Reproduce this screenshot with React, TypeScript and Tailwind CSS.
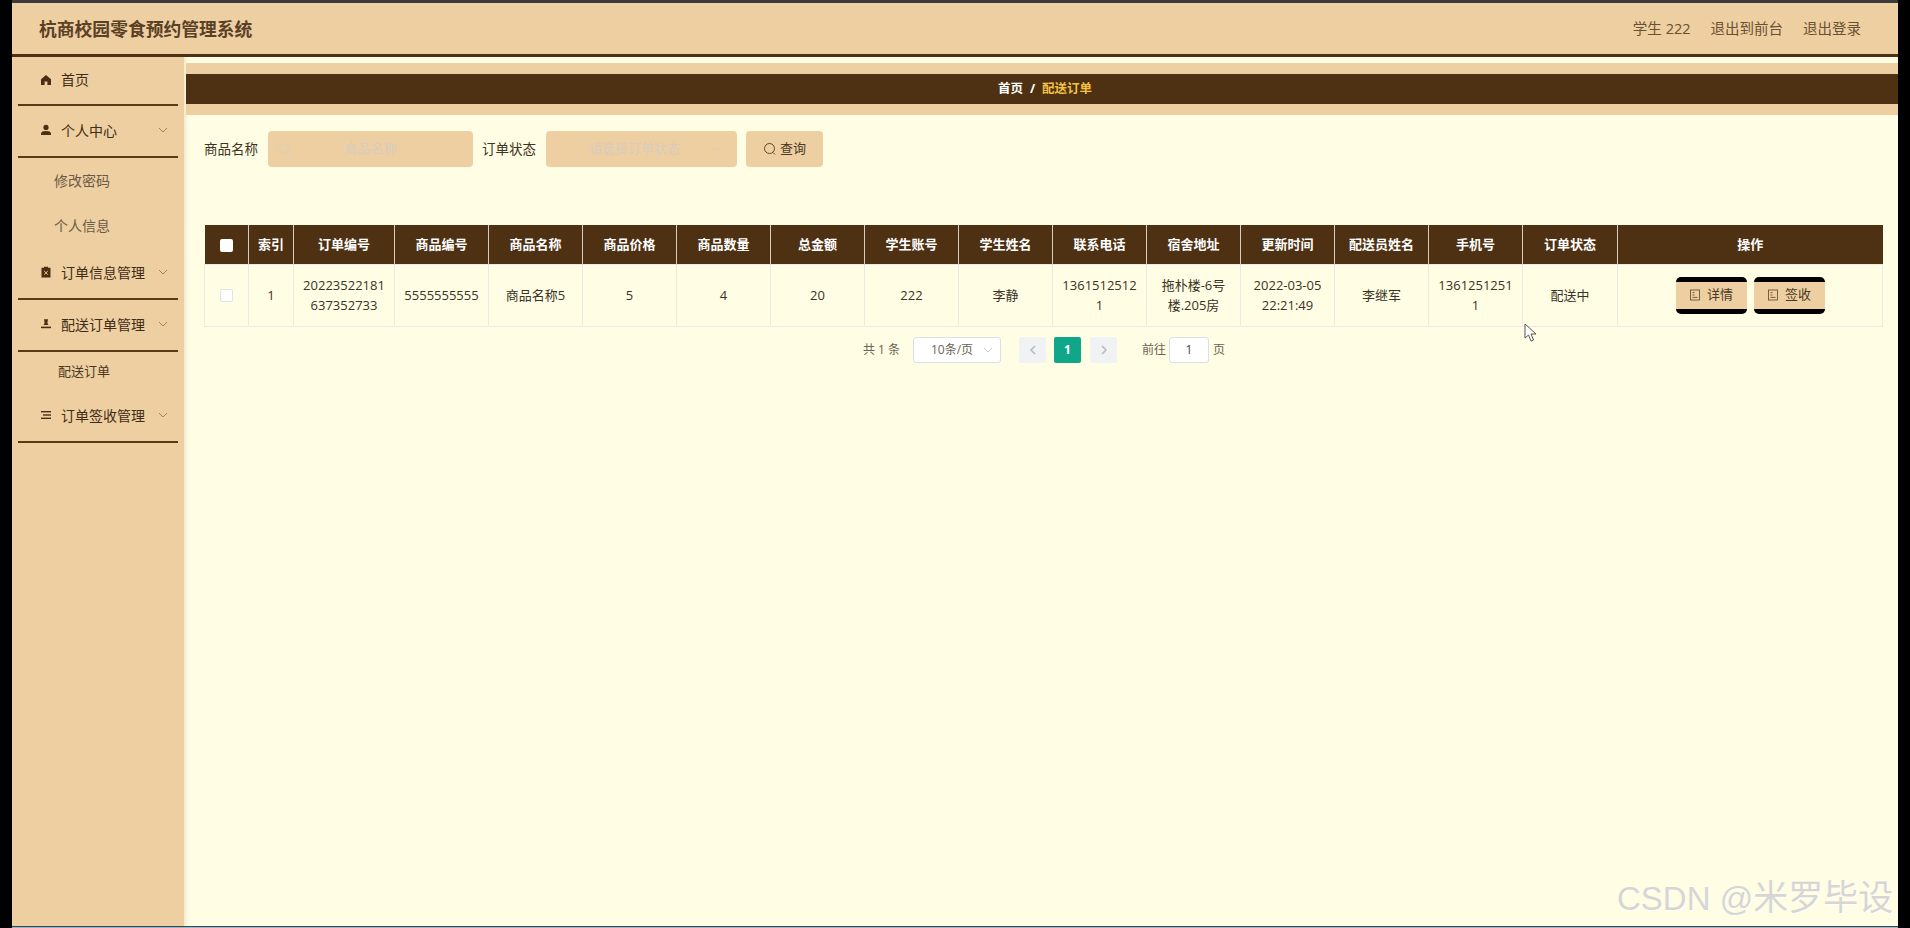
import React from "react";

const font = { fontFamily: '"Open Sans", "Noto Sans CJK SC", sans-serif' };

const columns = [
  { title: "索引", width: "w-[45px]" },
  { title: "订单编号", width: "w-[101px]" },
  { title: "商品编号", width: "w-[94px]" },
  { title: "商品名称", width: "w-[94px]" },
  { title: "商品价格", width: "w-[94px]" },
  { title: "商品数量", width: "w-[94px]" },
  { title: "总金额", width: "w-[94px]" },
  { title: "学生账号", width: "w-[94px]" },
  { title: "学生姓名", width: "w-[94px]" },
  { title: "联系电话", width: "w-[94px]" },
  { title: "宿舍地址", width: "w-[94px]" },
  { title: "更新时间", width: "w-[94px]" },
  { title: "配送员姓名", width: "w-[94px]" },
  { title: "手机号", width: "w-[94px]" },
  { title: "订单状态", width: "w-[95px]" },
  { title: "操作", width: "w-[265px]" },
];

const row = [
  "1",
  "20223522181637352733",
  "5555555555",
  "商品名称5",
  "5",
  "4",
  "20",
  "222",
  "李静",
  "13615125121",
  "拖朴楼-6号楼.205房",
  "2022-03-05 22:21:49",
  "李继军",
  "13612512511",
  "配送中",
];

function HomeIcon() {
  return (
    <svg viewBox="0 0 12 12" className="w-3 h-3" fill="#4a2f14">
      <path d="M6 1 L11 5.2 V11 H7.4 V7.6 H4.6 V11 H1 V5.2 Z" />
    </svg>
  );
}

function UserIcon() {
  return (
    <svg viewBox="0 0 12 12" className="w-3 h-3" fill="#4a2f14">
      <circle cx="6" cy="3.4" r="2.6" />
      <path d="M1 11 V9.6 C1 7.8 3 7 6 7 C9 7 11 7.8 11 9.6 V11 Z" />
    </svg>
  );
}

function OrderIcon() {
  return (
    <svg viewBox="0 0 12 12" className="w-3 h-3" fill="#4a2f14">
      <path d="M1.5 1.8 H4 V0.8 H8 V1.8 H10.5 V11.5 H1.5 Z" />
      <path d="M4.2 5 L7.8 8.6 M7.8 5 L4.2 8.6" stroke="#eecfa1" strokeWidth="1" />
    </svg>
  );
}

function CustomIcon() {
  return (
    <svg viewBox="0 0 12 12" className="w-3 h-3" fill="#4a2f14">
      <path d="M4 1.2 H8 L7.4 5 L8.4 7 H3.6 L4.6 5 Z" />
      <rect x="1" y="8.6" width="10" height="1.6" />
    </svg>
  );
}

function ListIcon() {
  return (
    <svg viewBox="0 0 12 12" className="w-3 h-3" fill="#4a2f14">
      <rect x="1" y="2" width="10" height="1.4" />
      <rect x="3" y="5.3" width="8" height="1.4" />
      <rect x="1" y="8.6" width="10" height="1.4" />
    </svg>
  );
}

function Chevron({ color = "#8d7a60" }: { color?: string }) {
  return (
    <svg viewBox="0 0 12 12" className="w-3 h-3" fill="none" stroke={color} strokeWidth="0.9">
      <path d="M2 4 L6 8 L10 4" />
    </svg>
  );
}

function PageArrow({ d }: { d: string }) {
  return (
    <svg viewBox="0 0 12 12" className="w-3 h-3" fill="none" stroke="#b4b8bf" strokeWidth="1.5">
      <path d={d} />
    </svg>
  );
}

function SearchIcon({ color }: { color: string }) {
  return (
    <svg viewBox="0 0 14 14" className="w-[14px] h-[14px]" fill="none" stroke={color} strokeWidth="1">
      <circle cx="6.5" cy="6.5" r="5" />
      <path d="M10 10.5 L12 12.5" />
    </svg>
  );
}

function DocIcon() {
  return (
    <svg viewBox="0 0 12 12" className="w-[12px] h-[12px]" fill="none" stroke="#6a5238" strokeWidth="0.9">
      <rect x="1.5" y="1" width="9" height="10" />
      <path d="M3.5 3.6 H5.5 M3.5 6 H5.5 M3.5 8.4 H8.5" />
    </svg>
  );
}

function MenuGroup({
  icon,
  label,
  children,
  arrow = true,
}: {
  icon: React.ReactNode;
  label: string;
  children?: React.ReactNode;
  arrow?: boolean;
}) {
  return (
    <div>
      <div
        className={`${
          arrow ? "h-[52px]" : "h-[49px]"
        } mx-[6px] border-b-[2px] border-[#5a3a17] flex items-center pl-[22px] pr-[9px] pb-[2px]`}
      >
        <span className="w-[21px] flex items-center">{icon}</span>
        <span className="text-[14px] text-[#3f2c17]">{label}</span>
        {arrow && (
          <span className="ml-auto">
            <Chevron />
          </span>
        )}
      </div>
      {children}
    </div>
  );
}

function Sidebar() {
  return (
    <aside className="w-[172px] shrink-0 bg-[#eecfa1] shadow-[2px_0_3px_rgba(120,90,40,0.12)]">
      <MenuGroup icon={<HomeIcon />} label="首页" arrow={false} />
      <MenuGroup icon={<UserIcon />} label="个人中心">
        <div className="h-[45px] pl-[42px] flex items-center text-[14px] text-[#6b5a45]">修改密码</div>
        <div className="h-[45px] pl-[42px] flex items-center text-[14px] text-[#6b5a45]">个人信息</div>
      </MenuGroup>
      <MenuGroup icon={<OrderIcon />} label="订单信息管理" />
      <MenuGroup icon={<CustomIcon />} label="配送订单管理">
        <div className="h-[39px] pl-[46px] flex items-center text-[13px] text-[#4b3820]">配送订单</div>
      </MenuGroup>
      <MenuGroup icon={<ListIcon />} label="订单签收管理" />
    </aside>
  );
}

function Filters() {
  return (
    <div className="flex items-center mt-[16px] ml-[20px] text-[13.5px] text-[#3d3426]">
      <span className="w-[64px] whitespace-nowrap">商品名称</span>
      <div className="w-[205px] h-[36px] rounded bg-[#eecfa1] flex items-center pl-[10px]">
        <SearchIcon color="#d9cfc0" />
        <span className="flex-1 text-center pr-[24px] text-[13px] text-[#d6ccc0]">商品名称</span>
      </div>
      <span className="w-[64px] ml-[9px] whitespace-nowrap">订单状态</span>
      <div className="w-[191px] h-[36px] rounded bg-[#eecfa1] flex items-center pr-[14px]">
        <span className="flex-1 text-center pl-[12px] text-[13px] text-[#d6ccc0]">请选择订单状态</span>
        <Chevron color="#d6ccc0" />
      </div>
      <button className="w-[77px] h-[36px] ml-[9px] rounded bg-[#eecfa1] flex items-center justify-center gap-[3px] text-[13px] text-[#4a3a26]">
        <SearchIcon color="#5b4630" />
        查询
      </button>
    </div>
  );
}

function OrderTable() {
  return (
    <table className="table-fixed w-[1678px] ml-[20px] mt-[58px] border-collapse text-[13px] text-center">
      <colgroup>
        <col className="w-[44px]" />
        {columns.map((c) => (
          <col key={c.title} className={c.width} />
        ))}
      </colgroup>
      <thead>
        <tr className="h-[39px] bg-[#4e3013] text-white">
          <th className="border-r border-[#d8cfc0] p-0">
            <span className="inline-block align-middle w-[13px] h-[13px] bg-white rounded-[2px]" />
          </th>
          {columns.map((c) => (
            <th key={c.title} className="border-r last:border-r-0 border-[#d8cfc0] p-0 font-bold text-[13px]">
              {c.title}
            </th>
          ))}
        </tr>
      </thead>
      <tbody>
        <tr className="h-[62px] text-[#3a3328]">
          <td className="border border-[#ebebe3] p-0">
            <span className="inline-block align-middle w-[13px] h-[13px] bg-white border border-[#e0e2e6] rounded-[2px]" />
          </td>
          {row.map((v, i) => (
            <td key={i} className="border border-[#ebebe3] px-[8px] leading-[20px] break-all">
              {v}
            </td>
          ))}
          <td className="border border-[#ebebe3] p-0">
            <div className="flex justify-center gap-[7px]">
              {["详情", "签收"].map((t) => (
                <button
                  key={t}
                  className="w-[71px] h-[37px] rounded-[5px] bg-[#eecfa1] border-y-[5px] border-black flex items-center justify-center gap-[6px] text-[13px] text-[#4a3a26]"
                >
                  <DocIcon />
                  {t}
                </button>
              ))}
            </div>
          </td>
        </tr>
      </tbody>
    </table>
  );
}

function Pagination() {
  return (
    <div className="flex items-center mt-[10px] ml-[679px] h-[26px] text-[12px] text-[#6b6355]">
      <span className="w-[50px]">共 1 条</span>
      <div className="w-[88px] h-[26px] bg-white border border-[#dcdfe6] rounded-[3px] flex items-center pl-[17px] pr-[6px]">
        <span className="flex-1">10条/页</span>
        <Chevron color="#c0c4cc" />
      </div>
      <div className="w-[27px] h-[26px] ml-[18px] bg-[#f1f2f4] rounded-[2px] flex items-center justify-center">
        <PageArrow d="M8 2 L4 6 L8 10" />
      </div>
      <div className="w-[27px] h-[26px] ml-[8px] bg-[#0fa68a] rounded-[2px] flex items-center justify-center text-white font-bold">
        1
      </div>
      <div className="w-[27px] h-[26px] ml-[9px] bg-[#f1f2f4] rounded-[2px] flex items-center justify-center">
        <PageArrow d="M4 2 L8 6 L4 10" />
      </div>
      <span className="ml-[25px] w-[27px]">前往</span>
      <div className="w-[40px] h-[26px] bg-white border border-[#dcdfe6] rounded-[3px] flex items-center justify-center text-[#4a4438]">
        1
      </div>
      <span className="ml-[4px]">页</span>
    </div>
  );
}

export default function App() {
  return (
    <div className="relative w-[1910px] h-[928px] overflow-hidden bg-black flex flex-col" style={font}>
      <div className="h-[3px] bg-[#3b3b3d] mx-[12px]" />

      <div className="mx-[12px] flex-1 flex flex-col min-h-0 bg-[#fffde3]">
        {/* Header */}
        <header className="h-[54px] shrink-0 bg-[#eecfa1] border-b-[3px] border-[#4e3013] flex items-center pl-[27px] pr-[37px]">
          <h1 className="text-[17.8px] font-bold text-[#5a4025] pt-[1px]">杭商校园零食预约管理系统</h1>
          <nav className="ml-auto flex gap-[20px] text-[14.5px] text-[#6a5132]">
            <span>学生 222</span>
            <span>退出到前台</span>
            <span>退出登录</span>
          </nav>
        </header>

        <div className="flex-1 flex min-h-0">
          <Sidebar />
          <main className="flex-1 min-w-0 pt-[6px]">
            <div className="py-[11px] ml-[2px] bg-[#eecfa1]">
              <div className="h-[30px] bg-[#4e3013] flex items-center justify-center gap-[7px] pl-[6px] text-[12.5px] font-bold">
                <span className="text-white">首页</span>
                <span className="text-white">/</span>
                <span className="text-[#f5c242]">配送订单</span>
              </div>
            </div>
            <Filters />
            <OrderTable />
            <Pagination />
          </main>
        </div>
      </div>

      <div className="h-[1px] mx-[12px] bg-[#2f4a55]" />
      <div className="h-[1px] mx-[12px] bg-[#9fb4c0]" />

      {/* Recording cursor */}
      <svg viewBox="0 0 14 20" className="absolute left-[1524px] top-[323px] w-[14px] h-[20px]" fill="#ffffff" stroke="#555555" strokeWidth="1">
        <path d="M1 1 V15 L4.5 12 L7 18 L9.5 17 L7 11 H12 Z" />
      </svg>

      {/* CSDN watermark */}
      <div
        className="absolute left-[1617px] top-[878px] w-[281px] whitespace-nowrap text-[33px] leading-[40px] text-[#d6d6d2] [text-shadow:1px_1px_0_#ffffff]"
        style={{ fontFamily: '"Liberation Sans", "Noto Sans CJK SC", sans-serif' }}
      >
        CSDN @<span className="text-[35px]">米罗毕设</span>
      </div>
    </div>
  );
}
